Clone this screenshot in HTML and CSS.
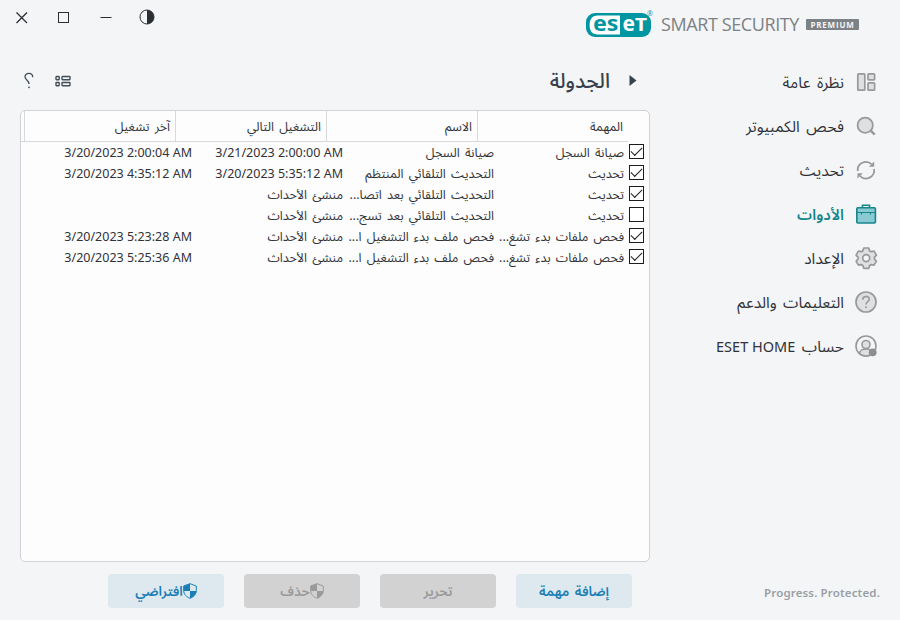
FILE: index.html
```html
<!DOCTYPE html>
<html lang="ar" dir="rtl">
<head>
    <meta charset="utf-8">
    <title>ESET Smart Security Premium</title>
    <link rel="stylesheet" href="styles.css">
</head>
<body>
    <header class="titlebar">
        <div class="brand" dir="ltr">
            <svg class="logo" width="70" height="32" viewBox="0 0 70 32">
                <rect x="0" y="5" width="65" height="24" rx="9" fill="#0096a1"/>
                <path d="M34 7.500H11Q3.500 8 3.500 17T11 26.500H34Z" fill="#fff"/>
                <text class="logo-text" x="7" y="23" textLength="25.500" lengthAdjust="spacingAndGlyphs" fill="#0096a1">es</text>
                <text class="logo-text" x="36.500" y="23" textLength="12.500" lengthAdjust="spacingAndGlyphs" fill="#fff">e</text>
                <text class="logo-text small" x="49" y="23" textLength="12" lengthAdjust="spacingAndGlyphs" fill="#fff">T</text>
                <text class="logo-mark" x="61" y="7.500" fill="#0096a1">®</text>
            </svg>
            <span class="product">SMART SECURITY</span>
            <span class="edition">PREMIUM</span>
        </div>
        <div class="controls" dir="ltr">
            <svg width="14" height="14" viewBox="0 0 14 14"><path d="M1.500 2.500l10.500 10.500M12 2.500l-10.500 10.500" stroke="#2b2f33" stroke-width="1.300"/></svg>
            <svg width="14" height="14" viewBox="0 0 14 14"><rect x="1.500" y="2.500" width="10" height="10" fill="none" stroke="#2b2f33"/></svg>
            <svg width="14" height="14" viewBox="0 0 14 14"><path d="M1.500 7.500h11" stroke="#2b2f33"/></svg>
            <svg width="16" height="16" viewBox="0 0 16 16"><circle cx="8" cy="8" r="7" fill="none" stroke="#2b2f33"/><path d="M8 1a7 7 0 0 1 0 14z" fill="#2b2f33"/></svg>
        </div>
    </header>

    <div class="layout">
        <aside class="sidebar">
            <nav class="menu">
                <a class="item">
                    <svg viewBox="0 0 24 24"><g fill="#dfe0e1" stroke="#999" stroke-width="1.700"><rect x="3.800" y="3.800" width="7" height="16.400" rx=".8"/><rect x="14" y="3.800" width="6.600" height="6" rx=".8"/><rect x="14" y="12.800" width="6.600" height="7.400" rx=".8"/></g></svg>
                    <span>نظرة عامة</span>
                </a>
                <a class="item">
                    <svg viewBox="0 0 24 24"><circle cx="11.200" cy="11.200" r="7.600" fill="#dfe0e1" stroke="#999" stroke-width="1.800"/><path d="M16.700 16.700l4 4" stroke="#999" stroke-width="2.400"/></svg>
                    <span>فحص الكمبيوتر</span>
                </a>
                <a class="item">
                    <svg viewBox="0 0 24 24"><g fill="none" stroke="#999" stroke-width="1.800"><path d="M3.700 13A8.200 8.200 0 0 1 17.500 6.200"/><path d="M20 11A8.200 8.200 0 0 1 6 18"/></g><path d="M20.200 3.500v5.300h-5.300zM3.500 20.500v-5.300h5.300z" fill="#999"/></svg>
                    <span>تحديث</span>
                </a>
                <a class="item active">
                    <svg viewBox="0 0 24 24"><path d="M8.500 6V3.300h7V6" fill="none" stroke="#14868c" stroke-width="1.600"/><rect x="2.800" y="5.800" width="18.600" height="15.200" rx="1" fill="#8acbd3" stroke="#14868c" stroke-width="1.600"/><path d="M3 10.500h18M7.500 10.500v2M16.500 10.500v2" stroke="#14868c" stroke-width="1.200"/></svg>
                    <span>الأدوات</span>
                </a>
                <a class="item">
                    <svg viewBox="0 0 24 24"><path d="M9.800 2h4.900l1 2.900 1.400.8 3-.6 2.300 4-2 2.300v1.500l2 2.300-2.300 4-3-.6-1.400.8-1 2.900H9.800l-1-2.900-1.400-.8-3 .6-2.300-4 2-2.300v-1.500l-2-2.300 2.300-4 3 .6 1.400-.8z" fill="#dfe0e1" stroke="#999" stroke-width="1.700" stroke-linejoin="round"/><circle cx="12.200" cy="12.100" r="3.500" fill="#f4f5f7" stroke="#999" stroke-width="1.700"/></svg>
                    <span>الإعداد</span>
                </a>
                <a class="item">
                    <svg viewBox="0 0 24 24"><circle cx="12" cy="12" r="10" fill="#dfe0e1" stroke="#999" stroke-width="1.700"/><path d="M8.700 9.700c0-4.300 6.600-4.300 6.600-.4 0 2.400-3.300 2.400-3.300 5.200" fill="none" stroke="#999" stroke-width="1.600"/><circle cx="12" cy="17.300" r="1" fill="#999"/></svg>
                    <span>التعليمات والدعم</span>
                </a>
                <a class="item">
                    <svg viewBox="0 0 24 24"><circle cx="12" cy="12" r="10" fill="#f4f5f7" stroke="#999" stroke-width="1.600"/><path d="M5.500 19.500c0-6 13-6 13 0-3 3.200-10 3.200-13 0z" fill="#dfe0e1" stroke="#999" stroke-width="1.500"/><circle cx="12" cy="10.500" r="4" fill="#dfe0e1" stroke="#999" stroke-width="1.600"/><circle cx="18.700" cy="18.300" r="3.900" fill="#8f8f8f"/></svg>
                    <span>حساب <bdi class="latin">ESET HOME</bdi></span>
                </a>
            </nav>
            <p class="slogan" dir="ltr">Progress. Protected.</p>
        </aside>

        <main class="content">
            <div class="heading">
                <svg width="8" height="12" viewBox="0 0 8 12"><path d="M.5 0L7.500 5.500L.5 11z" fill="#37424c"/></svg>
                <h1>الجدولة</h1>
                <div class="tools" dir="ltr">
                    <svg width="10" height="18" viewBox="0 0 10 18"><path d="M8.700 5.200C8.700 .2 1 .2 1 4.800c0 3.400 4 2.900 4 7.200" fill="none" stroke="#414d57" stroke-width="1.300"/><circle cx="5" cy="15.300" r=".9" fill="#414d57"/></svg>
                    <svg width="16" height="12" viewBox="0 0 16 12"><g fill="none" stroke="#414d57" stroke-width="1.400"><rect x="1" y="1.500" width="3.200" height="3.200" rx=".6"/><rect x="7" y="1.500" width="8" height="3.200" rx=".6"/><rect x="1" y="7.500" width="3.200" height="3.200" rx=".6"/><rect x="7" y="7.500" width="8" height="3.200" rx=".6"/></g></svg>
                </div>
            </div>

            <section class="table">
                <div class="thead">
                    <span>المهمة</span>
                    <span>الاسم</span>
                    <span>التشغيل التالي</span>
                    <span>آخر تشغيل</span>
                </div>
                <div class="row">
                    <i class="check on"></i>
                    <span>صيانة السجل</span>
                    <span>صيانة السجل</span>
                    <span class="date" dir="ltr">3/21/2023 2:00:00 AM</span>
                    <span class="date" dir="ltr">3/20/2023 2:00:04 AM</span>
                </div>
                <div class="row">
                    <i class="check on"></i>
                    <span>تحديث</span>
                    <span>التحديث التلقائي المنتظم</span>
                    <span class="date" dir="ltr">3/20/2023 5:35:12 AM</span>
                    <span class="date" dir="ltr">3/20/2023 4:35:12 AM</span>
                </div>
                <div class="row">
                    <i class="check on"></i>
                    <span>تحديث</span>
                    <span>التحديث التلقائي بعد اتصا...</span>
                    <span>منشئ الأحداث</span>
                    <span></span>
                </div>
                <div class="row">
                    <i class="check"></i>
                    <span>تحديث</span>
                    <span>التحديث التلقائي بعد تسج...</span>
                    <span>منشئ الأحداث</span>
                    <span></span>
                </div>
                <div class="row">
                    <i class="check on"></i>
                    <span>فحص ملفات بدء تشغ...</span>
                    <span>فحص ملف بدء التشغيل ا...</span>
                    <span>منشئ الأحداث</span>
                    <span class="date" dir="ltr">3/20/2023 5:23:28 AM</span>
                </div>
                <div class="row">
                    <i class="check on"></i>
                    <span>فحص ملفات بدء تشغ...</span>
                    <span>فحص ملف بدء التشغيل ا...</span>
                    <span>منشئ الأحداث</span>
                    <span class="date" dir="ltr">3/20/2023 5:25:36 AM</span>
                </div>
            </section>

            <div class="actions">
                <button>إضافة مهمة</button>
                <button disabled>تحرير</button>
                <button disabled>
                    <svg width="14" height="16" viewBox="0 0 14 16"><path d="M7 .7L13.300 3v4.500c0 4-3 6.500-6.300 7.800C3.700 14 .7 11.500 .7 7.500V3z" fill="#d2d2d2" stroke="currentColor"/><path d="M7 .7V8H.7V3zM7 8h6.300c0 3.700-3 6-6.300 7.300z" fill="currentColor"/></svg>حذف
                </button>
                <button>
                    <svg width="14" height="16" viewBox="0 0 14 16"><path d="M7 .7L13.300 3v4.500c0 4-3 6.500-6.300 7.800C3.700 14 .7 11.500 .7 7.500V3z" fill="#dde8ef" stroke="currentColor"/><path d="M7 .7V8H.7V3zM7 8h6.300c0 3.700-3 6-6.300 7.300z" fill="currentColor"/></svg>افتراضي
                </button>
            </div>
        </main>
    </div>
</body>
</html>
```

FILE: styles.css
```css
* {
    box-sizing: border-box;
}
body {
    margin: 0;
    width: 900px;
    height: 620px;
    overflow: hidden;
    display: flex;
    flex-direction: column;
    background: #f4f5f7;
    color: #303238;
    font-family: "Noto Sans", "Noto Sans Arabic", "DejaVu Sans", sans-serif;
}
svg {
    display: block;
    flex: none;
}

/* title bar */
.titlebar {
    height: 60px;
    display: flex;
    justify-content: space-between;
    padding: 0 41px 0 15px;
}
.brand {
    display: flex;
    padding-top: 8px;
}
.logo {
    overflow: visible;
}
.logo-text {
    font: bold 22px "Noto Sans", sans-serif;
}
.logo-text.small {
    font-size: 17px;
}
.logo-mark {
    font: 7px "Open Sans", sans-serif;
}
.product {
    margin-left: 5px;
    width: 145px;
    font: 18px/32px "Open Sans", sans-serif;
    letter-spacing: -0.4px;
    color: #7b8185;
    white-space: nowrap;
}
.edition {
    margin-top: 11px;
    width: 53px;
    height: 11px;
    background: #7b8185;
    border-radius: 1px;
    color: #f4f5f7;
    font: bold 8px/11px "Open Sans", sans-serif;
    letter-spacing: 0.8px;
    text-align: center;
}
.controls {
    display: flex;
    gap: 28px;
    padding-top: 10px;
}
.controls svg:last-child {
    margin: -1px 0 0 -2px;
}

/* side menu */
.layout {
    flex: 1;
    display: flex;
}
.sidebar {
    width: 250px;
    padding: 0 22px 18px 20px;
    display: flex;
    flex-direction: column;
    justify-content: space-between;
}
.item {
    height: 44px;
    display: flex;
    align-items: center;
    gap: 10px;
    font-size: 15.5px;
    word-spacing: 2.5px;
    white-space: nowrap;
}
.item svg {
    width: 24px;
    height: 24px;
}
.item span {
    padding-top: 1px;
}
.item.active {
    color: #14868c;
    font-size: 15px;
    font-weight: 600;
}
.latin {
    font-size: 14.5px;
    word-spacing: 0;
}
.slogan {
    margin: 0 -2px 0 0;
    text-align: right;
    font: 600 11.5px/18px "Noto Sans", sans-serif;
    letter-spacing: 0.15px;
    color: #9a9fa5;
}

/* scheduler */
.content {
    width: 630px;
}
.heading {
    height: 50px;
    display: flex;
    align-items: center;
    padding: 0 13px 8px 0;
}
h1 {
    margin: 0 19px 0 0;
    font-size: 20.5px;
    font-weight: 500;
    color: #37424c;
}
.tools {
    margin-right: auto;
    display: flex;
    align-items: center;
    gap: 21px;
    padding-left: 4px;
}
.table {
    height: 452px;
    background: #fdfdfd;
    border: 1px solid #d0d2d5;
    border-radius: 5px;
    font-size: 12.5px;
    word-spacing: 2px;
    white-space: nowrap;
}
.thead {
    width: 607px;
    height: 31px;
    margin-right: 21px;
    display: grid;
    grid-template-columns: 151px 151px 151px 151px 3px;
    border-bottom: 1px solid #d8d9db;
    line-height: 31px;
}
.thead span {
    padding-right: 5px;
    border-left: 1px solid #d8d9db;
}
.row {
    height: 21px;
    display: grid;
    grid-template-columns: 15px 135px 151px 151px 146px;
    padding-right: 5px;
    line-height: 21px;
}
.row span:nth-child(2) {
    padding-right: 5px;
}
.row .date {
    text-align: right;
    font-family: "Noto Sans", sans-serif;
    word-spacing: 0;
}
.check {
    width: 15px;
    height: 15px;
    margin-top: 2px;
    border: 1px solid #1c1c1c;
    background: #fff;
}
.check.on::before {
    content: "";
    display: block;
    width: 10px;
    height: 5px;
    margin: 2px 1px 0 0;
    border: solid #1c1c1c;
    border-width: 0 0 1.5px 1.5px;
    transform: rotate(-45deg);
}
.actions {
    display: flex;
    gap: 20px;
    padding: 12px 18px 0 0;
}
button {
    width: 116px;
    height: 34px;
    display: flex;
    align-items: center;
    justify-content: center;
    padding: 0;
    border: 0;
    border-radius: 4px;
    background: #dde8ef;
    color: #1a7fb5;
    font-family: inherit;
    font-size: 13.5px;
    font-weight: 600;
    word-spacing: 2px;
}
button:disabled {
    background: #d2d2d2;
    color: #9a9a9a;
}
```
